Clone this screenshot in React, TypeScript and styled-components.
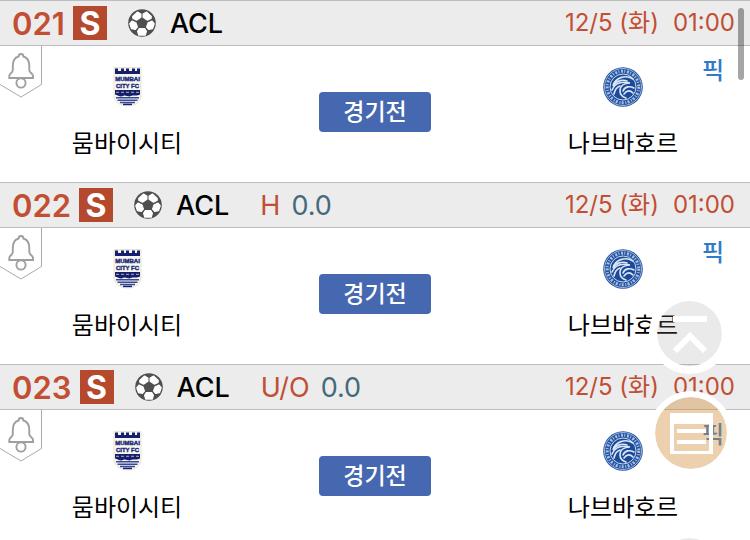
import React from "react";
import styled, { createGlobalStyle } from "styled-components";

const GlobalStyle = createGlobalStyle`
  * { box-sizing: border-box; }
  body {
    margin: 0;
    overflow: hidden;
    background: #fff;
    font-family: Inter, "Noto Sans CJK KR", sans-serif;
    color: #000;
  }
  button { font: inherit; padding: 0; border: 0; background: none; cursor: pointer; }
`;

const List = styled.main`
  display: flex;
  flex-direction: column;
`;

const Match = styled.article`
  display: flex;
  flex-direction: column;
  min-height: 182px;
`;

const Header = styled.header`
  display: flex;
  align-items: center;
  height: 46px;
  padding: 0 15px 0 12px;
  background: #ececec;
  border-top: 1px solid #bdbdbd;
  border-bottom: 1px solid #bdbdbd;
  white-space: nowrap;
`;

const Number = styled.span`
  font-size: 31px;
  font-weight: 600;
  color: #c24e33;
`;

const Sport = styled.span`
  width: 34px;
  height: 34px;
  margin-left: 8px;
  background: #b5492e;
  color: #fff;
  font-size: 32px;
  font-weight: 700;
  line-height: 36px;
  text-align: center;
`;

const BallIcon = styled.svg`
  width: 28px;
  height: 28px;
  margin-left: 21px;
`;

const League = styled.span`
  margin-left: 14px;
  font-size: 27px;
  font-weight: 500;
`;

const Market = styled.span`
  margin-left: 31px;
  font-size: 27px;
  color: #c24e33;
`;

const Line = styled.span`
  margin-left: 11px;
  font-size: 27px;
  color: #44697c;
`;

const Kickoff = styled.time`
  display: flex;
  align-items: baseline;
  gap: 14px;
  margin-left: auto;
  font-size: 24px;
  line-height: 28px;
  color: #c24e33;
`;

const Body = styled.div`
  display: grid;
  grid-template-columns: 42px 170fr 107fr 112px 113fr 158fr 48px;
  flex: 1;
`;

const Alarm = styled.button`
  grid-column: 1;
  align-self: start;
  width: 42px;
  height: 52px;
  svg { display: block; }
`;

const Team = styled.div<{ $side: "home" | "away" }>`
  grid-column: ${(p) => (p.$side === "home" ? 2 : 6)};
  display: flex;
  flex-direction: column;
  align-items: center;
  gap: 18px;
  padding-top: 20px;
`;

const Crest = styled.svg`
  width: 42px;
  height: 42px;
`;

const TeamName = styled.span`
  font-size: 24px;
  font-weight: 400;
  line-height: 36px;
  white-space: nowrap;
`;

const Status = styled.button`
  grid-column: 4;
  align-self: start;
  height: 40px;
  margin-top: 46px;
  border-radius: 4px;
  background: #4668b0;
  color: #fff;
  font-size: 23px;
  font-weight: 500;
  line-height: 40px;
`;

const Pick = styled.button`
  grid-column: 7;
  align-self: start;
  justify-self: start;
  padding-top: 7px;
  color: #2e7bcb;
  font-size: 24px;
  font-weight: 500;
  line-height: 36px;
`;

const ScrollThumb = styled.div`
  position: fixed;
  top: 8px;
  right: 6px;
  width: 6px;
  height: 72px;
  border-radius: 3px;
  background: rgba(0, 0, 0, 0.35);
`;

const Floating = styled.div`
  position: fixed;
  top: 293px;
  right: 17px;
  display: flex;
  flex-direction: column;
  align-items: flex-start;
`;

const RoundButton = styled.button<{ $tone: "gray" | "orange" }>`
  display: grid;
  place-items: center;
  width: ${(p) => (p.$tone === "gray" ? 81 : 84)}px;
  height: ${(p) => (p.$tone === "gray" ? 81 : 84)}px;
  margin-bottom: ${(p) => (p.$tone === "gray" ? 17 : 55)}px;
  border: ${(p) => (p.$tone === "gray" ? 8 : 6)}px solid #fff;
  border-radius: 50%;
  background: ${(p) =>
    p.$tone === "gray" ? "rgba(150, 150, 150, 0.2)" : "rgba(210, 140, 52, 0.4)"};
  background-clip: padding-box;
`;

function Ball() {
  return (
    <BallIcon viewBox="0 0 28 28" aria-hidden="true">
      <circle cx="14" cy="14" r="13.8" fill="#4f4f4f" />
      <g fill="#fff" stroke="#fff" strokeWidth="1.4" strokeLinejoin="round">
        <path d="M12.8 5.2V8.2L8.8 11 5 9.3 4.8 7.6 9.4 3.2Z" />
        <path d="M15.200 5.200V8.200L19.200 11 23 9.300 23.200 7.600 18.600 3.200Z" />
        <path d="M4 12.200 7.800 13.800 9.300 18 7.300 20.200 3.500 19.600 1.900 14.800Z" />
        <path d="M24 12.200 20.200 13.800 18.700 18 20.700 20.200 24.500 19.600 26.100 14.800Z" />
        <path d="M11.200 19.800H16.800L18.300 22.300 17.200 26H10.800L9.700 22.300Z" />
      </g>
    </BallIcon>
  );
}

function Bell() {
  return (
    <svg width="42" height="52" viewBox="0 0 42 52" fill="none" stroke="#aaa">
      <path d="M41.5 0V38.5L21 51 0 38.5" />
      <g stroke="#9f9f9f" strokeWidth="1.9">
        <path d="M18.6 10.5C18.6 7.2 23.4 7.2 23.4 10.5C28 11.8 29.3 16 29.3 20V24C29.3 27 33 27.5 33 30V32H9.3V30C9.3 27.5 12.8 27 12.8 24V20C12.8 16 14 11.8 18.6 10.5Z" />
        <circle cx="21" cy="37" r="4.6" />
      </g>
    </svg>
  );
}

function MumbaiCrest() {
  return (
    <Crest viewBox="0 0 42 42" role="img" aria-label="뭄바이시티">
      <path d="M8 1.500H35V29C35 36 29 40 21.500 40S8 36 8 29Z" fill="#f8f6ef" stroke="#e8e3d4" />
      <path d="M9 2.500H12V5H15V2.500H18V5H20V2.500H23V5H26V2.500H29V5H31V2.500H34V8H9Z" fill="#141f70" />
      <g
        fill="#1c2c7c"
        stroke="#1c2c7c"
        strokeWidth="0.4"
        fontFamily="'Liberation Sans Narrow', 'Liberation Sans'"
        fontWeight="700"
        textAnchor="middle"
      >
        <text x="21.500" y="15" fontSize="6">MUMBAI</text>
        <text x="21.500" y="22" fontSize="6">CITY FC</text>
      </g>
      <path d="M9 24H34V28.500C30 30.500 28 28.500 25 30S20 28.500 17 30 12 29 9 28.500Z" fill="#141f70" />
      <path d="M10 26.300H33" stroke="#b8b29a" strokeDasharray="3 2" />
      <path d="M10 31.700H33M11.500 34.200H31.500M14 36.500H29" stroke="#34499a" strokeWidth="1.400" />
      <path d="M17 38.400H26" stroke="#141f70" strokeWidth="1.500" />
    </Crest>
  );
}

function NavbahorCrest() {
  return (
    <Crest viewBox="0 0 42 42" role="img" aria-label="나브바호르">
      <circle cx="21" cy="21" r="19.800" fill="#2453a0" />
      <circle cx="21" cy="21" r="18.500" fill="none" stroke="#9db7dc" />
      <circle cx="21" cy="21" r="15.800" fill="none" stroke="#a9c0e2" strokeWidth="3" strokeDasharray="2 1.300 1 1.700" />
      <circle cx="21" cy="21" r="13" fill="#1b4a9a" stroke="#c9d8ee" />
      <g fill="none" stroke="#dce7f5" strokeWidth="1.600" strokeLinecap="round">
        <path d="M31 13C23 8 13 12 11 20C14 15 20 13 25 15" />
        <path d="M10 24C13 17 19 15 28 17C22 17 18 20 18 25C18 29 21 31 24 32" />
        <path d="M12 28C13 23 15 21 18 20M21 25C23 20 28 20 32 22M22 28C25 24 28 24 31 27" />
      </g>
    </Crest>
  );
}

const matches = [
  { no: "021", market: "", line: "" },
  { no: "022", market: "H", line: "0.0" },
  { no: "023", market: "U/O", line: "0.0" },
];

export default function App() {
  return (
    <>
      <GlobalStyle />
      <List>
        {matches.map((m) => (
          <Match key={m.no}>
            <Header>
              <Number>{m.no}</Number>
              <Sport>S</Sport>
              <Ball />
              <League>ACL</League>
              {m.market && <Market>{m.market}</Market>}
              {m.line && <Line>{m.line}</Line>}
              <Kickoff>
                <span>12/5 (화)</span>
                <span>01:00</span>
              </Kickoff>
            </Header>
            <Body>
              <Alarm aria-label="알림"><Bell /></Alarm>
              <Team $side="home"><MumbaiCrest /><TeamName>뭄바이시티</TeamName></Team>
              <Status>경기전</Status>
              <Team $side="away"><NavbahorCrest /><TeamName>나브바호르</TeamName></Team>
              <Pick>픽</Pick>
            </Body>
          </Match>
        ))}
      </List>
      <ScrollThumb />
      <Floating>
        <RoundButton $tone="gray" aria-label="맨 위로">
          <svg width="36" height="38" viewBox="0 0 36 38" fill="none" stroke="#fff" strokeWidth="6">
            <path d="M1 4H35M3 36 18 21 33 36" />
          </svg>
        </RoundButton>
        <RoundButton $tone="orange" aria-label="목록">
          <svg width="43" height="41" viewBox="0 0 43 41" fill="#fff">
            <path fillRule="evenodd" d="M0 0H43V41H0ZM4 11V38H39V11Z" />
            <path d="M7 16H36V20H7ZM7 27H36V31H7Z" />
          </svg>
        </RoundButton>
        <RoundButton $tone="gray" aria-label="맨 아래로" />
      </Floating>
    </>
  );
}
